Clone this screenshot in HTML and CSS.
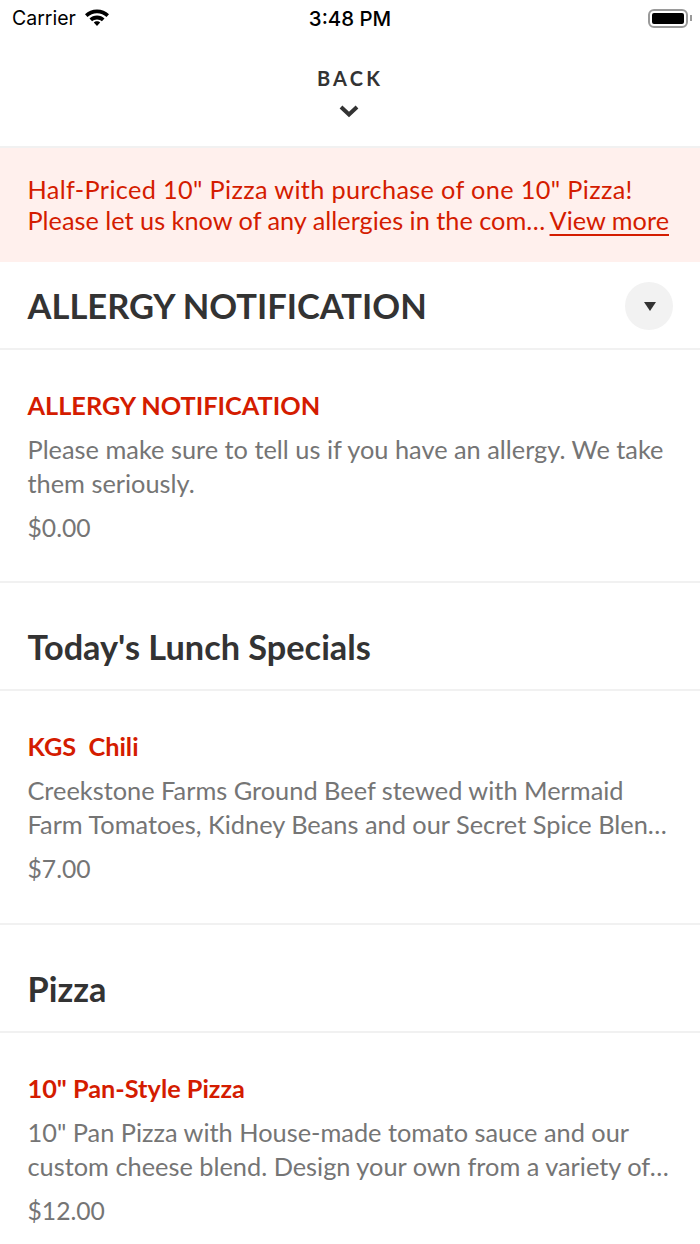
FILE: index.html
```html
<!DOCTYPE html>
<html lang="en">

<head>
  <meta charset="UTF-8">
  <meta name="viewport" content="width=device-width, initial-scale=1.0">
  <title>Menu</title>
  <link rel="stylesheet" href="styles.css">
</head>

<body>
  <div class="status-bar">
    <div class="status-left">
      <span>Carrier</span>
      <svg class="wifi" width="26" height="18" viewBox="0 0 26 18">
        <path d="M13 1.5C8.2 1.5 4.1 3.3 1 6.3l2.5 2.8C6 6.700 9.300 5.200 13 5.200s7 1.500 9.500 3.900L25 6.300C21.900 3.300 17.800 1.500 13 1.500z" />
        <path d="M13 7.500c-3 0-5.600 1.100-7.500 3l2.600 2.800c1.300-1.200 3-1.900 4.900-1.900s3.600.7 4.900 1.900l2.600-2.800c-1.900-1.900-4.500-3-7.500-3z" />
        <path d="M13 13.300c-1.300 0-2.400.5-3.200 1.300l3.200 3.300 3.200-3.300c-.8-.8-1.900-1.300-3.200-1.300z" />
      </svg>
    </div>
    <div class="status-time">3:48 PM</div>
    <div class="status-right">
      <div class="battery"><div class="battery-fill"></div></div>
      <div class="battery-cap"></div>
    </div>
  </div>

  <div class="back-bar">
    <div class="back-label">BACK</div>
    <svg class="back-chevron" width="22" height="14" viewBox="0 0 22 14">
      <path d="M3 3L11 10.500L19 3" />
    </svg>
  </div>

  <div class="notice">
    <div class="notice-first">Half-Priced 10" Pizza with purchase of one 10" Pizza!</div>
    <div class="notice-row">
      <span class="notice-text">Please let us know of any allergies in the com…</span>
      <a class="notice-link" href="#">View more</a>
    </div>
  </div>

  <section>
    <div class="section-head section-head-first">
      <h2 class="section-title section-title-big">ALLERGY NOTIFICATION</h2>
      <div class="toggle"><span class="toggle-arrow"></span></div>
    </div>
    <div class="item item-first">
      <h3 class="item-name">ALLERGY NOTIFICATION</h3>
      <p class="item-desc">Please make sure to tell us if you have an allergy. We take them seriously.</p>
      <div class="item-price">$0.00</div>
    </div>
  </section>

  <section>
    <div class="section-head">
      <h2 class="section-title">Today's Lunch Specials</h2>
    </div>
    <div class="item">
      <h3 class="item-name">KGS&nbsp; Chili</h3>
      <p class="item-desc">Creekstone Farms Ground Beef stewed with Mermaid<br>Farm Tomatoes, Kidney Beans and our Secret Spice Blen…</p>
      <div class="item-price">$7.00</div>
    </div>
  </section>

  <section>
    <div class="section-head">
      <h2 class="section-title">Pizza</h2>
    </div>
    <div class="item">
      <h3 class="item-name">10" Pan-Style Pizza</h3>
      <p class="item-desc">10" Pan Pizza with House-made tomato sauce and our<br>custom cheese blend. Design your own from a variety of…</p>
      <div class="item-price">$12.00</div>
    </div>
  </section>
</body>

</html>
```

FILE: styles.css
```css
html,
body {
  height: 1244px;
  overflow: hidden;
}

body {
  font-family: 'Lato', sans-serif;
  background-color: #ffffff;
  color: #333333;
  margin: 0;
}

h2,
h3,
p {
  margin: 0;
}

/* Status bar */
.status-bar {
  height: 36px;
  padding: 0 8px 0 12px;
  display: flex;
  align-items: center;
  justify-content: space-between;
  position: relative;
  font-family: 'Inter', sans-serif;
  color: #000000;
}

.status-left {
  display: flex;
  align-items: center;
  gap: 8px;
  font-size: 19.500px;
}

.wifi {
  fill: #000000;
  margin-top: -3px;
}

.status-time {
  position: absolute;
  left: 0;
  right: 0;
  text-align: center;
  font-size: 20.400px;
  font-weight: 500;
}

.status-right {
  display: flex;
  align-items: center;
  gap: 2px;
}

.battery {
  width: 40px;
  height: 19px;
  box-sizing: border-box;
  border: 2px solid #9a9a9a;
  border-radius: 6px;
  padding: 2px;
}

.battery-fill {
  height: 100%;
  background: #000000;
  border-radius: 2px;
}

.battery-cap {
  width: 2px;
  height: 6px;
  background: #9a9a9a;
}

/* Back */
.back-bar {
  height: 112px;
  box-sizing: border-box;
  border-bottom: 2px solid #f1f1f1;
  display: flex;
  flex-direction: column;
  align-items: center;
  padding-top: 30px;
}

.back-label {
  font-size: 20px;
  line-height: 24px;
  font-weight: 700;
  letter-spacing: 3.200px;
}

.back-chevron {
  margin-top: 14px;
  margin-right: 2px;
  fill: none;
  stroke: #333333;
  stroke-width: 4;
}

/* Banner */
.notice {
  background-color: #fff0ed;
  color: #d41c00;
  font-size: 25.300px;
  line-height: 31px;
  height: 114px;
  box-sizing: border-box;
  padding: 26px 31px 0 27.500px;
}

.notice-first {
  letter-spacing: 0.340px;
}

.notice-row {
  display: flex;
  justify-content: space-between;
  white-space: nowrap;
}

.notice-link {
  color: #d41c00;
  text-underline-offset: 4px;
}

/* Sections */
.section-head {
  height: 108px;
  box-sizing: border-box;
  padding: 0 27px 0 27.500px;
  display: flex;
  align-items: flex-end;
  justify-content: space-between;
  border-bottom: 2px solid #f1f1f1;
}

.section-head-first {
  height: 88px;
  align-items: center;
  padding-top: 2px;
}

.section-title {
  font-size: 34.300px;
  line-height: 40px;
  font-weight: 700;
  padding-bottom: 22px;
}

.section-head-first .section-title {
  font-size: 34.500px;
  padding-bottom: 0;
}

.toggle {
  width: 48px;
  height: 48px;
  border-radius: 50%;
  background-color: #f2f2f2;
  display: flex;
  align-items: center;
  justify-content: center;
}

.toggle-arrow {
  width: 0;
  height: 0;
  margin-left: 1px;
  border-left: 6px solid transparent;
  border-right: 6px solid transparent;
  border-top: 9px solid #333333;
}

.item {
  height: 234px;
  box-sizing: border-box;
  padding: 37px 28px 0 27.500px;
  border-bottom: 2px solid #f1f1f1;
}

.item-first {
  height: 233px;
}

.item-name {
  color: #d41c00;
  font-size: 25.300px;
  line-height: 36px;
  font-weight: 700;
}

.item-desc {
  color: #757575;
  font-size: 25.350px;
  line-height: 34px;
  margin-top: 9px;
}

.item-price {
  color: #757575;
  font-size: 24.700px;
  line-height: 34px;
  margin-top: 11px;
}
```
